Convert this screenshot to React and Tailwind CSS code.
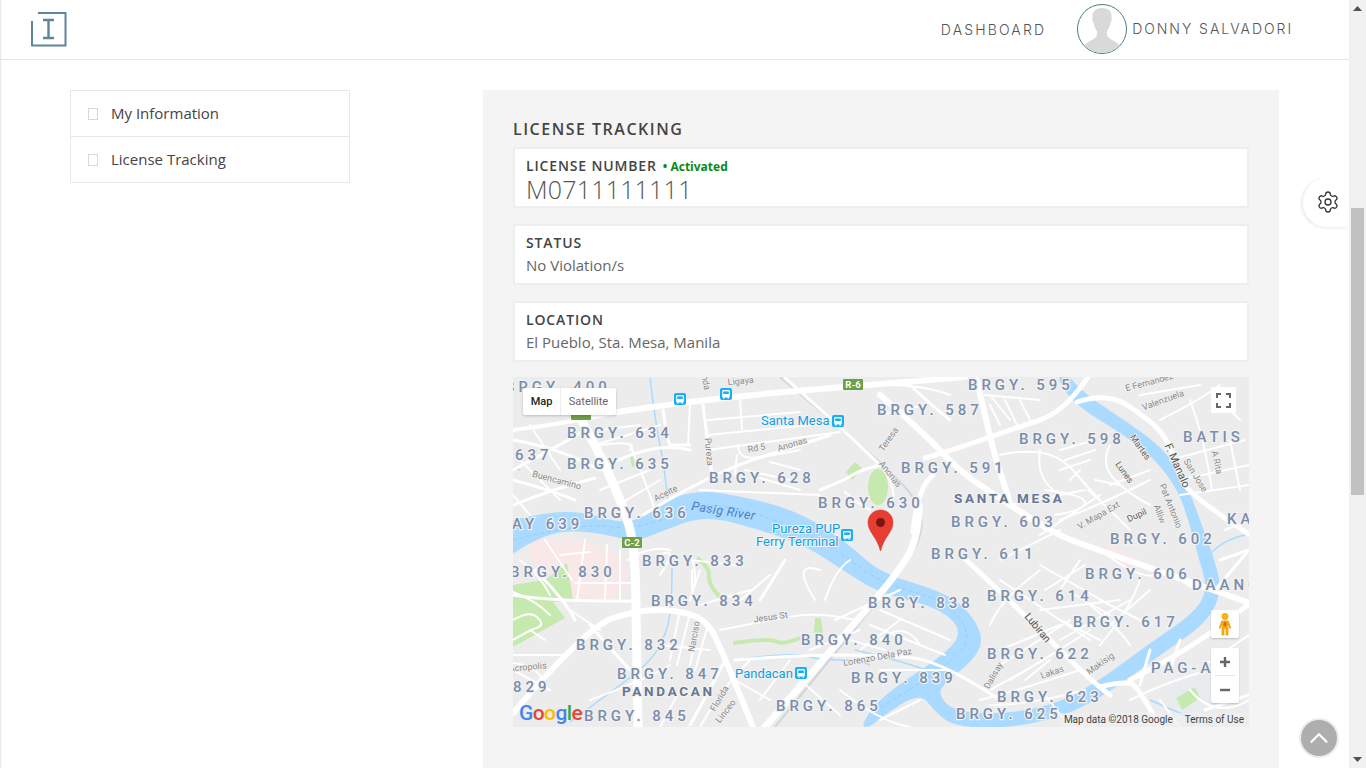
import React from "react";
import { Settings, ChevronUp } from "lucide-react";

const smooth = (p) => {
  let d = `M${p[0][0]} ${p[0][1]}`;
  if (p.length === 2) return d + `L${p[1][0]} ${p[1][1]}`;
  for (let i = 1; i < p.length - 1; i++) {
    const mx = (p[i][0] + p[i + 1][0]) / 2;
    const my = (p[i][1] + p[i + 1][1]) / 2;
    d += `Q${p[i][0]} ${p[i][1]} ${i === p.length - 2 ? p[i + 1][0] : mx} ${i === p.length - 2 ? p[i + 1][1] : my}`;
  }
  return d;
};
const area = (p) => smooth([...p, p[0]]) + "Z";

const riverAreas = [
  [[505,522],[545,512],[585,512],[615,522],[640,520],[665,500],[700,490],[745,497],[800,512],[850,545],[880,573],[947,593],[972,615],[984,640],[972,662],[945,682],[938,695],[955,712],[1010,714],[1062,702],[1103,678],[1150,643],[1193,614],[1208,590],[1198,556],[1190,525],[1178,490],[1154,458],[1124,435],[1075,405],[1056,378],[1066,372],[1082,392],[1130,424],[1163,448],[1186,482],[1200,520],[1214,558],[1222,590],[1208,622],[1160,655],[1110,692],[1065,716],[1010,728],[955,727],[935,712],[920,692],[880,718],[870,727],[860,727],[880,697],[947,653],[963,630],[937,607],[880,593],[850,575],[805,545],[760,530],[705,515],[660,532],[635,542],[600,533],[560,530],[525,545],[505,560]],
];

const roads = [
  [4,[[513,430],[570,423],[617,412]]],
  [6,[[617,412],[680,403],[760,394],[843,387],[965,377]]],
  [9,[[566,392],[590,435],[612,480],[630,525],[635,560],[636,600],[638,727]]],
  [7,[[919,505],[919,530],[905,565],[840,640],[765,727]]],
  [5,[[1088,377],[1065,412],[1010,430],[947,452],[925,458]]],
  [6,[[880,395],[923,432],[960,472],[1010,505],[1057,535],[1093,548],[1150,568],[1250,603]]],
  [6,[[977,380],[993,452],[1007,492],[1010,505]]],
  [5,[[963,557],[1020,610],[1093,683],[1110,695]]],
  [5,[[933,475],[917,488],[913,532]]],
  [5,[[1077,402],[1107,392],[1147,418],[1167,438],[1180,475],[1190,495],[1250,535]]],
  [6,[[513,713],[587,627],[637,610],[677,610],[707,620],[723,653],[753,727]]],
  [3,[[513,595],[555,602],[637,601]]],
  [5,[[1130,680],[1200,645],[1250,603]]],
  [5,[[1100,687],[1127,680],[1140,690],[1160,727]]],
  [3,[[643,515],[713,472],[810,442],[830,435]]],
  [3,[[513,480],[550,490],[575,500]]],
  [3,[[513,440],[560,448],[600,470]]],
  [3,[[513,470],[560,445],[582,432]]],
  [3,[[513,505],[550,490],[595,478]]],
  [2,[[513,495],[530,515]]],
  [2,[[520,460],[560,500]]],
  [3,[[600,470],[650,440],[690,450]]],
  [2,[[600,490],[650,470]]],
  [2,[[610,510],[660,480]]],
  [2,[[630,445],[645,480],[655,510]]],
  [2,[[600,445],[640,440],[630,450]]],
  [3,[[663,410],[668,445],[672,445],[690,445]]],
  [2,[[690,405],[688,445]]],
  [3,[[703,405],[708,445],[712,475]]],
  [2,[[740,398],[742,430]]],
  [2,[[708,420],[800,412]]],
  [2,[[708,435],[810,425]]],
  [2,[[708,450],[780,440],[840,432]]],
  [2,[[737,455],[735,475]]],
  [2,[[738,445],[738,460],[775,455],[800,450]]],
  [2,[[770,462],[800,470]]],
  [2,[[700,490],[820,495]]],
  [2,[[760,478],[800,490]]],
  [3,[[785,378],[850,435],[885,470]]],
  [3,[[820,490],[845,480],[860,470],[880,465]]],
  [2,[[880,465],[900,490],[890,510]]],
  [2,[[845,492],[860,505],[870,510]]],
  [3,[[905,380],[925,400],[950,420]]],
  [2,[[880,415],[925,405]]],
  [2,[[885,385],[925,385],[950,395]]],
  [2,[[990,395],[1010,420]]],
  [2,[[985,395],[1040,400]]],
  [2,[[990,405],[1000,425]]],
  [2,[[1005,400],[1017,425]]],
  [2,[[1020,400],[1030,420]]],
  [2,[[1000,455],[1020,450],[1060,455],[1090,490],[1100,500]]],
  [2,[[1040,450],[1035,480],[1060,495]]],
  [2,[[1060,450],[1095,440]]],
  [2,[[1065,460],[1095,450]]],
  [2,[[1060,470],[1090,460]]],
  [2,[[1070,480],[1080,470]]],
  [2,[[1110,445],[1100,465],[1130,495],[1150,505]]],
  [2,[[1110,485],[1150,470]]],
  [2,[[1095,480],[1120,485]]],
  [2,[[1010,505],[1060,495],[1085,490]]],
  [2,[[1060,520],[1100,505],[1150,480]]],
  [2,[[1045,490],[1085,495],[1085,510],[1055,515]]],
  [2,[[1088,490],[1105,505],[1130,530]]],
  [2,[[1040,535],[1100,495]]],
  [2,[[1160,420],[1200,400],[1220,385]]],
  [2,[[1140,395],[1200,385]]],
  [2,[[1190,400],[1205,440],[1212,490]]],
  [2,[[1170,460],[1245,440]]],
  [2,[[1180,480],[1249,465]]],
  [2,[[1180,495],[1249,485]]],
  [2,[[1215,395],[1240,420]]],
  [2,[[1230,440],[1240,490]]],
  [2,[[1225,530],[1249,520]]],
  [3,[[1220,560],[1249,550]]],
  [2,[[1000,560],[1060,530]]],
  [2,[[1000,580],[1090,640]]],
  [2,[[1040,565],[1110,605]]],
  [2,[[1100,550],[1140,580],[1170,570],[1195,590]]],
  [2,[[1140,580],[1130,610],[1100,645]]],
  [2,[[1075,595],[1110,615]]],
  [2,[[1040,610],[1120,600]]],
  [2,[[1090,605],[1120,630],[1130,645]]],
  [2,[[1060,620],[1100,640]]],
  [2,[[1060,640],[1130,600]]],
  [2,[[990,625],[1000,600],[1040,570]]],
  [2,[[1000,650],[1060,625]]],
  [2,[[1000,665],[1040,640],[1070,620]]],
  [2,[[1010,680],[1060,650],[1090,630]]],
  [2,[[990,690],[1030,668],[1060,650]]],
  [2,[[1025,680],[1050,660]]],
  [2,[[980,700],[1020,690],[1080,670]]],
  [2,[[1045,695],[1070,727]]],
  [2,[[990,705],[1030,705],[1085,690]]],
  [3,[[1150,650],[1140,685]]],
  [3,[[1180,640],[1170,670]]],
  [2,[[1160,700],[1180,727]]],
  [2,[[1130,700],[1170,680],[1210,670]]],
  [2,[[1190,690],[1215,720],[1249,700]]],
  [3,[[1205,710],[1249,695]]],
  [3,[[1215,590],[1249,550]]],
  [2,[[1249,635],[1205,665]]],
  [2,[[1045,590],[1085,565]]],
  [2,[[835,620],[900,590]]],
  [2,[[720,630],[770,620],[820,612],[855,620]]],
  [2,[[825,600],[835,570],[850,560]]],
  [2,[[815,600],[790,560],[820,570]]],
  [3,[[760,600],[785,560]]],
  [2,[[700,605],[750,590]]],
  [2,[[735,605],[770,575]]],
  [2,[[690,560],[735,565]]],
  [2,[[692,570],[692,590]]],
  [2,[[700,570],[690,600]]],
  [2,[[660,555],[680,545],[660,575]]],
  [2,[[680,610],[670,660]]],
  [2,[[690,613],[677,665]]],
  [2,[[700,617],[690,665]]],
  [2,[[708,625],[695,670]]],
  [3,[[735,660],[800,655],[880,655],[940,660],[1000,700]]],
  [2,[[750,660],[720,690],[700,727]]],
  [2,[[790,660],[760,700]]],
  [2,[[735,680],[770,700]]],
  [2,[[800,680],[840,715]]],
  [2,[[840,690],[880,722],[910,727]]],
  [2,[[880,670],[950,670]]],
  [2,[[810,650],[860,630]]],
  [2,[[880,640],[905,620],[920,645]]],
  [2,[[850,640],[885,650]]],
  [2,[[860,650],[900,620]]],
  [2,[[660,645],[710,650]]],
  [2,[[670,665],[645,680],[590,700]]],
  [2,[[513,655],[565,655]]],
  [2,[[530,630],[545,640]]],
  [2,[[513,670],[550,690]]],
  [2,[[513,663],[540,665],[548,690]]],
  [3,[[590,625],[620,660],[640,680]]],
  [2,[[570,610],[600,630]]],
  [2,[[513,620],[530,610],[545,625],[530,630],[513,640]]],
  [2,[[513,592],[535,600],[550,615]]],
  [3,[[535,570],[565,600],[575,620]]],
  [2,[[520,560],[540,575],[550,595]]],
  [2,[[628,560],[650,545],[670,550]]],
  [2,[[690,600],[700,575],[690,555]]],
  [3,[[690,725],[710,690],[725,660]]],
  [2,[[660,727],[680,690]]],
  [2,[[920,700],[880,720]]],
  [2,[[585,540],[577,600]]],
  [2,[[607,545],[605,600]]],
  [2,[[620,550],[620,600]]],
  [2,[[575,583],[630,583]]],
  [2,[[545,540],[572,580]]],
  [2,[[560,555],[590,552]]],
  [2,[[600,430],[640,425]]],
  [2,[[595,445],[660,425]]],
  [2,[[530,425],[560,470]]],
  [2,[[745,470],[790,480]]],
  [2,[[880,610],[950,640]]],
  [2,[[870,625],[945,655]]],
  [2,[[1100,600],[1150,625]]],
  [2,[[1150,590],[1110,625]]],
  [2,[[1080,560],[1060,590]]],
];

const thinStreams = [
  [[650,378],[655,420],[665,470],[668,503]],
  [[672,568],[672,600],[667,633],[650,663],[600,700],[570,722]],
  [[735,660],[790,652],[820,660],[860,660],[870,665]],
  [[855,650],[920,665],[950,680]],
  [[1215,727],[1190,718],[1150,700]],
  [[1205,560],[1220,540],[1245,535]],
  [[520,470],[513,468]],
];

const brgy = [
  ["BRGY. 400",505,392],["BRGY. 595",968,390],["BRGY. 587",877,415],["BRGY. 634",567,438],["BRGY. 598",1019,444],["BATIS",1183,442],
  ["637",515,460],["BRGY. 635",567,469],["BRGY. 591",901,473],["BRGY. 628",709,483],["BRGY. 630",818,508],
  ["BRGY. 636",584,518],["BRGY. 603",951,527],["AY 639",512,529],["KA",1227,524],["BRGY. 602",1110,544],["BRGY. 611",931,559],
  ["BRGY. 833",642,566],["BRGY. 606",1085,579],["BRGY. 830",510,577],["DAANG",1192,590],["BRGY. 614",987,601],["BRGY. 834",651,606],
  ["BRGY. 838",868,608],["BRGY. 617",1073,627],["BRGY. 840",801,645],["BRGY. 832",576,650],["BRGY. 622",987,659],["PAG-ASA",1151,673],
  ["BRGY. 847",617,679],["BRGY. 839",851,683],["829",513,692],["BRGY. 623",997,702],["BRGY. 865",776,711],["BRGY. 845",584,721],["BRGY. 625",956,719],
];

const streets = [
  ["Ligaya",741,384,-6],["nda",703,383,80],["Pureza",706,452,85],["Rd 5",757,451,-10],["Anonas",793,447,-17],["Buencamino",556,483,15],
  ["Aceite",667,496,-27],["Teresa",891,441,-55],["Anonas",888,476,52],["E Fernandez",1150,385,-15],["Valenzuela",1164,403,-20],
  ["San Jose",1193,477,58],["A Rita",1214,463,78],["Pat Antonio",1168,507,68],["Alliw",1157,515,70],["V. Mapa Ext",1100,518,-30],
  ["Makisig",1102,666,-35],["Lakas",1053,675,-18],["Dalisay",996,677,-60],["Lorenzo Dela Paz",878,660,-10],["Jesus St",771,620,-8],
  ["Narciso",697,637,-80],["Florida",722,700,-60],["Linceo",728,713,-52],["Acropolis",528,670,-5],
];
const darkStreets = [
  ["Martes",1138,449,55],["Lunes",1122,474,55],["Dupil",1138,518,-25],
];

function Bus({ x, y, s = 12 }) {
  return (
    <g transform={`translate(${x - s / 2} ${y - s / 2}) scale(${s / 12})`}>
      <rect x="0" y="0" width="12" height="12" rx="2" fill="#18aef2" />
      <rect x="2.2" y="2" width="7.6" height="7.6" rx="1.2" fill="#fff" />
      <rect x="3.2" y="3.4" width="5.6" height="2.6" fill="#18aef2" />
      <rect x="3" y="9.4" width="1.6" height="1.2" fill="#fff" />
      <rect x="7.4" y="9.4" width="1.6" height="1.2" fill="#fff" />
    </g>
  );
}

function Shield({ x, y, w, label }) {
  return (
    <g>
      <rect x={x} y={y} width={w} height="11" rx="1" fill="#6f9f45" />
      <text x={x + w / 2} y={y + 9} textAnchor="middle" fontSize="9.5" fontWeight="700" fill="#fff" fontFamily="Roboto, sans-serif">{label}</text>
    </g>
  );
}

function MapCanvas() {
  return (
    <svg viewBox="513 377 736 350" className="block w-full h-full" xmlns="http://www.w3.org/2000/svg">
      <rect x="513" y="377" width="736" height="350" fill="#ececec" />
      <path d={area([[525,540],[575,538],[628,555],[628,600],[560,600],[535,570]])} fill="#f8e8e8" />
      <polygon points="1100,550 1112,545 1143,562 1135,572" fill="#f8e8e8" />
      <polygon points="1165,690 1210,668 1230,700 1200,727 1175,720" fill="#e8ecef" />
      <polygon points="513,585 545,580 567,563 573,600 553,602 565,618 513,647" fill="#c5e9ae" />
      <ellipse cx="878" cy="487" rx="10" ry="18" fill="#c5e9ae" />
      <polygon points="846,472 855,462 862,468 852,480" fill="#c5e9ae" />
      <polygon points="1176,698 1195,687 1200,698 1182,710" fill="#c5e9ae" />
      <path d={smooth([[733,643],[770,638],[783,645],[800,638]])} stroke="#c5e9ae" strokeWidth="4" fill="none" />
      <polygon points="815,618 821,618 823,633 814,633" fill="#c5e9ae" />
      <path d={smooth([[697,558],[710,567],[708,585],[720,597]])} stroke="#c5e9ae" strokeWidth="4" fill="none" />
      <polygon points="630,457 633,456 635,466 632,467" fill="#c5e9ae" />
      {riverAreas.map((r, i) => <path key={i} d={area(r)} fill="#aadaff" />)}
      {thinStreams.map((s, i) => <path key={i} d={smooth(s)} stroke="#aadaff" strokeWidth="1.5" fill="none" />)}
      <path d={smooth([[513,540],[580,523],[640,530],[700,502],[760,513],[830,545],[880,583],[945,600],[973,635],[950,665],[880,708]])} stroke="#8fc4ee" strokeWidth="0.7" strokeDasharray="4 3" fill="none" />
      <path d={smooth([[780,377],[855,440],[905,485],[925,515],[915,555],[850,635],[775,727]])} stroke="#d3d5da" strokeWidth="2" fill="none" />
      {roads.map(([w, p], i) => (
        <path key={i} d={smooth(p)} stroke="#ffffff" strokeWidth={w} fill="none" strokeLinecap="round" strokeLinejoin="round" />
      ))}
      <Shield x={843} y={379} w={20} label="R-6" />
      <Shield x={622} y={537} w={20} label="C-2" />
      <Shield x={571} y={409} w={20} label="" />
      <Bus x={680} y={399} />
      <Bus x={726} y={394} />
      <Bus x={838} y={421} />
      <Bus x={847} y={535} />
      <Bus x={801} y={673} />
      <g fontFamily="Roboto, sans-serif" fontWeight="500" fontSize="15" letterSpacing="3.95" fill="#7a8dab" stroke="#f2f2f2" strokeWidth="2.5" style={{ paintOrder: "stroke" }}>
        {brgy.map(([t, x, y], i) => <text key={i} x={x} y={y}>{t}</text>)}
      </g>
      <g fontFamily="Roboto, sans-serif" fontWeight="700" fontSize="13.5" letterSpacing="2.7" fill="#657792" stroke="#f2f2f2" strokeWidth="2.5" style={{ paintOrder: "stroke" }}>
        <text x="954" y="503">SANTA MESA</text>
        <text x="622" y="696">PANDACAN</text>
      </g>
      <g fontFamily="Roboto, sans-serif" fontSize="13" fill="#129de0" stroke="#f4f4f4" strokeWidth="2" style={{ paintOrder: "stroke" }}>
        <text x="761" y="425">Santa Mesa</text>
        <text x="772" y="533">Pureza PUP</text>
        <text x="756" y="546">Ferry Terminal</text>
        <text x="735" y="678">Pandacan</text>
      </g>
      <text x="691" y="510" transform="rotate(9 691 510)" fontFamily="Roboto, sans-serif" fontSize="12.5" fontStyle="italic" letterSpacing="0.4" fill="#4a7fc4">Pasig River</text>
      <g fontFamily="Roboto, sans-serif" fontSize="9" fill="#8a8a8a" stroke="#f2f2f2" strokeWidth="1.5" style={{ paintOrder: "stroke" }}>
        {streets.map(([t, x, y, r], i) => <text key={i} x={x} y={y} textAnchor="middle" transform={`rotate(${r} ${x} ${y})`}>{t}</text>)}
      </g>
      <g fontFamily="Roboto, sans-serif" fontSize="9" fill="#6a6458" stroke="#f2f2f2" strokeWidth="1.5" style={{ paintOrder: "stroke" }}>
        {darkStreets.map(([t, x, y, r], i) => <text key={i} x={x} y={y} textAnchor="middle" transform={`rotate(${r} ${x} ${y})`}>{t}</text>)}
      </g>
      <text x="1174" y="467" textAnchor="middle" transform="rotate(66 1174 467)" fontFamily="Roboto, sans-serif" fontSize="11" fill="#555" stroke="#f2f2f2" strokeWidth="2" style={{ paintOrder: "stroke" }}>F. Manalo</text>
      <text x="1035" y="630" textAnchor="middle" transform="rotate(50 1035 630)" fontFamily="Roboto, sans-serif" fontSize="10.5" fill="#555" stroke="#f2f2f2" strokeWidth="2" style={{ paintOrder: "stroke" }}>Lubiran</text>
      <path d="M880.500 510C873.500 510 868 515.500 868 522.500C868 532 877 537 880.500 551C884 537 893 532 893 522.500C893 515.500 887.500 510 880.500 510Z" fill="#e83d32" stroke="#c9302a" strokeWidth="0.5" />
      <circle cx="880.500" cy="522.500" r="4.500" fill="#7d1410" />
    </svg>
  );
}

function Field({ label, extra, children }) {
  return (
    <div className="h-[61px] border-2 border-[#eeeeee] bg-white px-[11px] pt-[7px]">
      <div className="flex items-baseline h-[20px] leading-[20px]">
        <span className="text-[14px] font-semibold tracking-[0.850px] text-[#444444]">{label}</span>
        {extra}
      </div>
      {children}
    </div>
  );
}

function SideItem({ label, last }) {
  return (
    <div className={`flex items-center pl-[17px] ${last ? "h-[45px]" : "h-[46px] border-b border-[#e8e8e8]"}`}>
      <span className="w-[10px] h-[12px] border border-[#d8d8d8]" />
      <span className="ml-[13px] text-[15px] text-[#444444]">{label}</span>
    </div>
  );
}

export default function App() {
  return (
    <div className="relative flex h-screen w-full overflow-hidden bg-white shadow-[inset_2px_0_2px_-1px_#e4e4e4] font-['Open_Sans',sans-serif]">
      <div className="flex-1 min-w-0 flex flex-col">
        <header className="h-[60px] shrink-0 border-b border-[#e5e5e5] flex items-center">
          <svg className="ml-[31px]" width="36" height="35" viewBox="0 0 36 35" fill="none">
            <path d="M7 1H34.500V33.500H1V9" stroke="#5c869b" strokeWidth="2" />
            <path d="M12 8H23M17.500 8V26M12 26H23" stroke="#5c869b" strokeWidth="2.400" />
          </svg>
          <div className="ml-auto flex items-center">
            <span className="text-[14px] tracking-[2.150px] text-[#555555] font-['Inter',sans-serif] font-light leading-none mt-[1px]">DASHBOARD</span>
            <div className="ml-[31px] w-[50px] h-[50px] rounded-full border border-[#4f7d82] overflow-hidden bg-white -mt-[1px]">
              <svg viewBox="0 0 48 48" className="w-full h-full">
                <path d="M24 3C17 3 14 7 14.500 12C14 14 14.500 17 15.500 18C16.500 22 18 25 19 26C19.500 29 19 31 17 33C13 36 7 37 5 44C10 47 17 48 24 48C31 48 38 47 43 44C41 37 35 36 31 33C29 31 28.500 29 29 26C30 25 31.500 22 32.500 18C33.500 17 34 14 33.500 12C34 7 31 3 24 3Z" fill="#d9d9d9" />
              </svg>
            </div>
            <span className="ml-[5px] mr-[56px] text-[14px] tracking-[1.950px] text-[#555555] font-['Inter',sans-serif] font-light leading-none -mt-[2px]">DONNY SALVADORI</span>
          </div>
        </header>
        <main className="flex-1 min-h-0 flex pt-[30px] pl-[70px]">
          <nav className="w-[280px] h-[93px] border border-[#e8e8e8]">
            <SideItem label="My Information" />
            <SideItem label="License Tracking" last />
          </nav>
          <section className="ml-[133px] w-[796px] h-full bg-[#f4f4f4] px-[30px] pt-[28px]">
            <h1 className="text-[16px] leading-[22px] font-semibold tracking-[1.500px] text-[#444444] mb-[7px]">LICENSE TRACKING</h1>
            <div className="flex flex-col gap-[16px]">
              <Field
                label="LICENSE NUMBER"
                extra={<span className="ml-[6px] text-[12px] font-bold text-[#0b8a12]">• Activated</span>}
              >
                <div className="text-[25px] leading-[24px] mt-[1px] text-[#555555] font-light tracking-[0.200px]">M0711111111</div>
              </Field>
              <Field label="STATUS">
                <div className="text-[15px] leading-[20px] mt-[2px] text-[#666666]">No Violation/s</div>
              </Field>
              <Field label="LOCATION">
                <div className="text-[15px] leading-[20px] mt-[2px] text-[#666666]">El Pueblo, Sta. Mesa, Manila</div>
              </Field>
            </div>
            <div className="relative mt-[15px] h-[350px] w-[736px] overflow-hidden">
              <MapCanvas />
              <div className="absolute left-[10px] top-[11px] h-[27px] flex bg-white rounded-[2px] shadow-[0_1px_3px_rgba(0,0,0,0.2)] font-['Roboto',sans-serif] text-[11px] leading-[27px]">
                <span className="w-[38px] text-center text-[#222222] font-medium border-r border-[#eeeeee]">Map</span>
                <span className="w-[55px] text-center text-[#666666]">Satellite</span>
              </div>
              <div className="absolute left-[698px] top-[10px] w-[25px] h-[26px] bg-white flex items-center justify-center">
                <svg width="15" height="15" viewBox="0 0 15 15" fill="none" stroke="#666" strokeWidth="2">
                  <path d="M1 5V1H5M10 1H14V5M14 10V14H10M5 14H1V10" />
                </svg>
              </div>
              <div className="absolute left-[698px] top-[233px] w-[28px] h-[28px] bg-white rounded-[2px] shadow-[0_1px_2px_rgba(0,0,0,0.2)] flex items-center justify-center">
                <svg width="14" height="23" viewBox="0 0 12 20">
                  <circle cx="6" cy="3" r="3" fill="#f5b21a" />
                  <path d="M3 6.500H9L11.500 13L10 14L9 10.500V19.500H6.500V14H5.500V19.500H3V10.500L2 14L0.500 13Z" fill="#eea917" />
                  <path d="M6 7L7.500 10L6 12L4.500 10Z" fill="#d06a1a" />
                </svg>
              </div>
              <div className="absolute left-[698px] top-[271px] w-[28px] h-[55px] bg-white rounded-[2px] shadow-[0_1px_2px_rgba(0,0,0,0.2)] flex flex-col items-center">
                <svg className="mt-[8px]" width="12" height="12" viewBox="0 0 12 12"><path d="M1 6H11M6 1V11" stroke="#666" strokeWidth="2.400" /></svg>
                <span className="w-[20px] h-px bg-[#e6e6e6] mt-[7px]" />
                <svg className="mt-[8px]" width="12" height="12" viewBox="0 0 12 12"><path d="M1 6H11" stroke="#666" strokeWidth="2.400" /></svg>
              </div>
              <div className="absolute left-[6px] top-[325px] text-[21px] leading-[22px] font-['Roboto',sans-serif] font-medium tracking-[-0.600px]">
                <span className="text-[#4285f4]">G</span>
                <span className="text-[#ea4335]">o</span>
                <span className="text-[#fbbc05]">o</span>
                <span className="text-[#4285f4]">g</span>
                <span className="text-[#34a853]">l</span>
                <span className="text-[#ea4335]">e</span>
              </div>
              <div className="absolute right-0 bottom-0 h-[14px] pl-[6px] pr-[5px] bg-[#f0f0f0]/70 flex gap-[12px] font-['Roboto',sans-serif] text-[10px] leading-[14px] text-[#444444]">
                <span>Map data ©2018 Google</span>
                <span>Terms of Use</span>
              </div>
            </div>
          </section>
        </main>
      </div>

      <div className="w-[17px] shrink-0 bg-[#f1f1f1] flex flex-col items-center relative">
        <svg className="mt-[6px]" width="9" height="5" viewBox="0 0 9 5"><path d="M0 5L4.500 0L9 5Z" fill="#505050" /></svg>
        <div className="mt-[197px] w-[13px] h-[287px] bg-[#c1c1c1]" />
        <svg className="mt-auto mb-[6px]" width="9" height="5" viewBox="0 0 9 5"><path d="M0 0L4.500 5L9 0Z" fill="#505050" /></svg>
      </div>

      <div className="absolute left-[1303px] top-[178px] w-[46px] h-[49px] bg-white rounded-l-[24px] shadow-[-2px_1px_3px_rgba(0,0,0,0.08)] flex items-center pl-[13px] pb-[2px]">
        <Settings size={24} strokeWidth={1.300} color="#333333" />
      </div>
      <div className="absolute left-[1301px] top-[720px] w-[36px] h-[36px] rounded-full bg-[#aeaeae] ring-2 ring-[#ececec] flex items-center justify-center">
        <ChevronUp size={30} strokeWidth={1.800} color="#ffffff" />
      </div>
    </div>
  );
}
